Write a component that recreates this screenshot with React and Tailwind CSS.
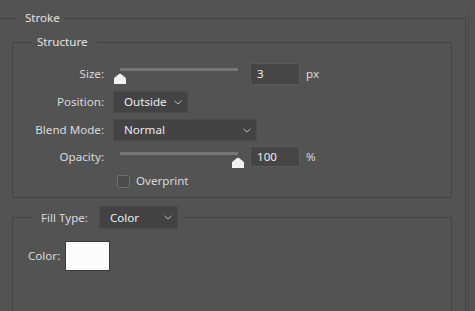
import React from 'react'

// Photoshop-style Layer Style > Stroke panel

const Chevron = () => (
  <svg width="8" height="5" viewBox="0 0 8 5" className="shrink-0">
    <path d="M0.5 0.8 L4 4 L7.5 0.8" fill="none" stroke="#b8b8b8" strokeWidth="1" />
  </svg>
)

const Thumb = () => (
  <svg width="14" height="12" viewBox="0 0 14 12">
    <path d="M1 11 L1 6 Q1 5 2 4.3 L6 1 Q7 0.3 8 1 L12 4.3 Q13 5 13 6 L13 11 Z" fill="#f2f2f2" />
  </svg>
)

function Select({ value, width, height = 'h-[22px]' }) {
  return (
    <div className={`flex items-center justify-between ${width} ${height} bg-[#434343] border border-[#4b4b4b] pl-[10px] pr-[5px] text-[#ececec]`}>
      <span>{value}</span>
      <Chevron />
    </div>
  )
}

function Slider({ pos, trackTop, thumbTop }) {
  return (
    <div className="relative w-[131px] h-full">
      <div className={`absolute left-[7px] w-[118px] h-[3px] bg-[#777777] ${trackTop}`} />
      <div className={`absolute ${pos} ${thumbTop}`}>
        <Thumb />
      </div>
    </div>
  )
}

function NumberBox({ value }) {
  return (
    <div className="ml-[6px] w-[50px] h-full flex items-center bg-[#454545] border border-[#5a5a5a] pl-[6px] text-[#eeeeee]">
      {value}
    </div>
  )
}

function Label({ children }) {
  return <div className="w-[91px] shrink-0 text-right mr-[9px]">{children}</div>
}

export default function App() {
  return (
    <div
      className="w-[475px] h-[311px] overflow-hidden bg-[#535353] pt-[10px] text-[11.6px] leading-[16px] text-[#dadada] flex"
      style={{ fontFamily: '"Noto Sans", "Open Sans", sans-serif' }}
    >
      <fieldset className="ml-[-10px] w-[476px] shrink-0 h-[400px] border border-[#444444] pl-[21px] pr-[13px] pt-[8px]">
        <legend className="ml-[4px] pl-[9px] pr-[4px] text-[#e4e4e4]">Stroke</legend>

        {/* Structure */}
        <fieldset className="border border-[#444444] pb-[7px]">
          <legend className="ml-[19px] pl-[5px] pr-[9px] text-[#e4e4e4]">Structure</legend>
          <div className="flex flex-col pt-[13px]">
            <div className="flex items-center h-[22px]">
              <Label>Size:</Label>
              <Slider pos="left-0" trackTop="top-[5px]" thumbTop="top-[10px]" />
              <NumberBox value="3" />
              <span className="ml-[6px]">px</span>
            </div>
            <div className="flex items-center h-[22px] mt-[6px]">
              <Label>Position:</Label>
              <Select value="Outside" width="w-[75px]" />
            </div>
            <div className="flex items-center h-[22px] mt-[6px]">
              <Label>Blend Mode:</Label>
              <Select value="Normal" width="w-[144px]" />
            </div>
            <div className="flex items-center h-[21px] mt-[5px]">
              <Label>Opacity:</Label>
              <Slider pos="left-[118px]" trackTop="top-[6px]" thumbTop="top-[11px]" />
              <NumberBox value="100" />
              <span className="ml-[6px]">%</span>
            </div>
            <div className="flex items-center h-[18px] mt-[5px]">
              <div className="w-[100px] shrink-0" />
              <div className="ml-[4px] w-[13px] h-[13px] rounded-[2px] border border-[#6e6e6e] bg-[#4c4c4c]" />
              <span className="ml-[6px]">Overprint</span>
            </div>
          </div>
        </fieldset>

        {/* Fill Type */}
        <fieldset className="mt-[8px] border border-[#444444] h-[200px]">
          <legend className="ml-[19px] pl-[9px] pr-[5px] flex items-center">
            <span className="w-[50px]">Fill Type:</span>
            <span className="ml-[8px]">
              <Select value="Color" width="w-[79px]" height="h-[23px]" />
            </span>
          </legend>
          <div className="flex items-center pt-[12px] pl-[15px]">
            <span className="w-[32px]">Color:</span>
            <div className="ml-[5px] w-[45px] h-[30px] bg-[#fdfcfd] border border-[#3a3a3a]" />
          </div>
        </fieldset>
      </fieldset>
      <div className="ml-[2px] w-px h-full bg-[#4a4a4a]" />
    </div>
  )
}
